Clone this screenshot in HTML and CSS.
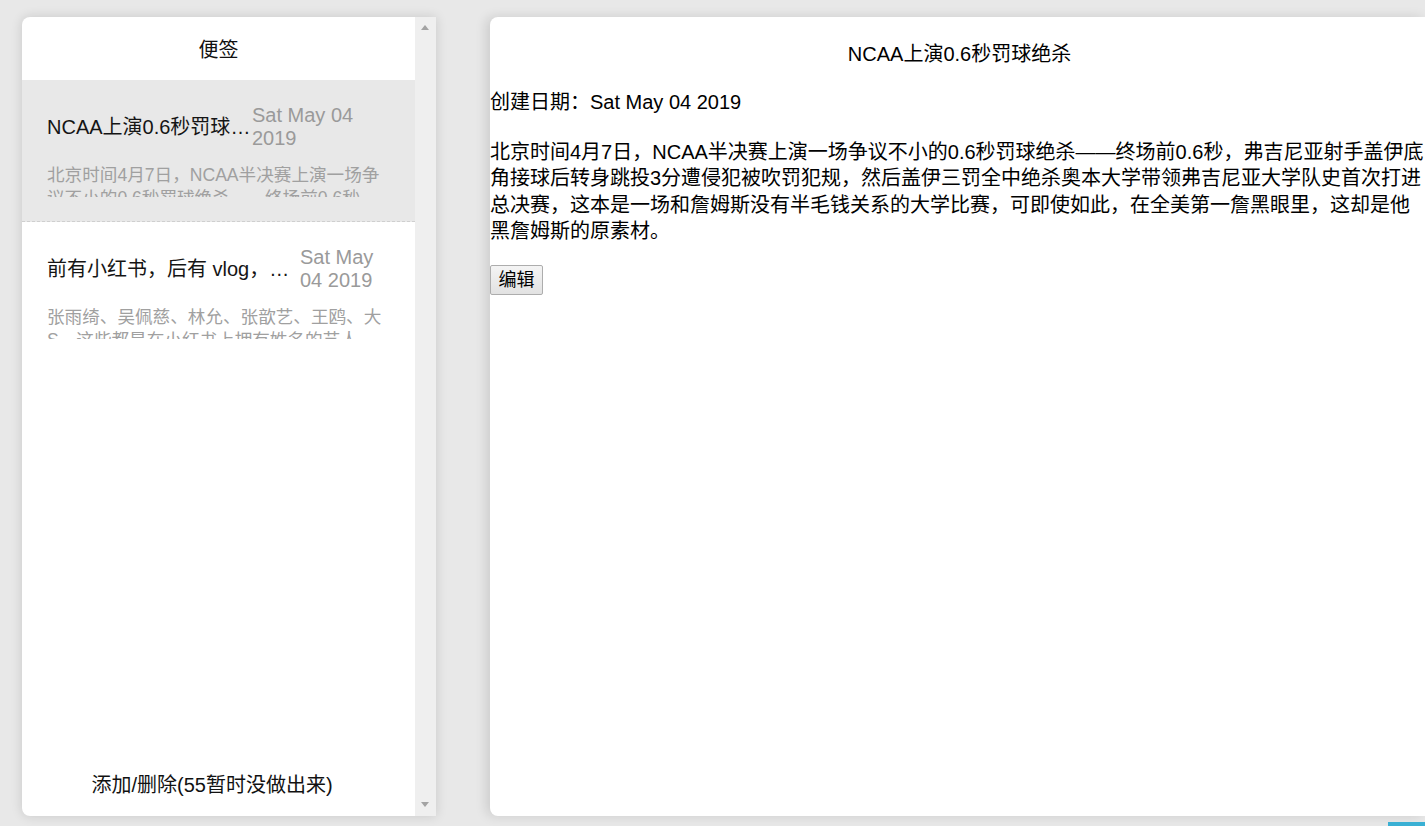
FILE: index.html
```html
<!DOCTYPE html>
<html lang="zh-CN">
<head>
<meta charset="utf-8">
<title>便签</title>
<link rel="stylesheet" href="styles.css">
</head>
<body>
<div class="page">
  <aside class="sidebar">
    <div class="sidebar-main">
      <div class="sidebar-header">便签</div>
      <ul class="note-list">
        <li class="note-item is-active">
          <div class="note-head">
            <span class="note-title">NCAA上演0.6秒罚球绝杀</span>
            <span class="note-date date-wide">Sat May 04 2019</span>
          </div>
          <p class="note-desc">北京时间4月7日，NCAA半决赛上演一场争议不小的0.6秒罚球绝杀——终场前0.6秒，弗吉尼亚射手盖伊底角接球后转身跳投3分遭侵犯被吹罚犯规</p>
        </li>
        <li class="note-item">
          <div class="note-head">
            <span class="note-title">前有小红书，后有 vlog，明星们的日常生活都被晒出来了</span>
            <span class="note-date date-narrow">Sat May 04 2019</span>
          </div>
          <p class="note-desc">张雨绮、吴佩慈、林允、张歆艺、王鸥、大S，这些都是在小红书上拥有姓名的艺人，她们在这里分享自己的日常</p>
        </li>
      </ul>
      <div class="sidebar-footer">添加/删除(55暂时没做出来)</div>
    </div>
    <div class="scrollbar">
      <span class="arrow arrow-up"></span>
      <span class="arrow arrow-down"></span>
    </div>
  </aside>
  <main class="detail">
    <h1 class="detail-title">NCAA上演0.6秒罚球绝杀</h1>
    <div class="detail-date">创建日期：Sat May 04 2019</div>
    <p class="detail-body">北京时间4月7日，NCAA半决赛上演一场争议不小的0.6秒罚球绝杀——终场前0.6秒，弗吉尼亚射手盖伊底角接球后转身跳投3分遭侵犯被吹罚犯规，然后盖伊三罚全中绝杀奥本大学带领弗吉尼亚大学队史首次打进总决赛，这本是一场和詹姆斯没有半毛钱关系的大学比赛，可即使如此，在全美第一詹黑眼里，这却是他黑詹姆斯的原素材。</p>
    <button class="edit-btn" type="button">编辑</button>
  </main>
</div>
<div class="corner-tab"></div>
</body>
</html>
```

FILE: styles.css
```css
* { box-sizing: border-box; }

html, body {
  margin: 0;
  padding: 0;
  height: 100%;
  overflow: hidden;
}

body {
  background: #e8e8e8;
  font-family: "Liberation Sans", Arial, "Noto Sans CJK SC", sans-serif;
  color: #000;
}

.page {
  display: flex;
  align-items: flex-start;
  gap: 54px;
  padding: 17px 0 0 22px;
}

/* ---------- sidebar ---------- */
.sidebar {
  display: flex;
  width: 414px;
  height: 799px;
  background: #fff;
  border-radius: 8px 0 0 8px;
  box-shadow: 0 0 12px rgba(0, 0, 0, 0.14);
  overflow: hidden;
  flex: 0 0 auto;
}

.sidebar-main {
  display: flex;
  flex-direction: column;
  width: 393px;
  height: 100%;
}

.sidebar-header {
  height: 63px;
  padding-top: 20px;
  font-size: 20px;
  line-height: 26.4px;
  text-align: center;
  color: #111;
}

.note-list {
  list-style: none;
  margin: 0;
  padding: 0;
  flex: 1 1 auto;
}

.note-item {
  padding: 24px 25px 24px 25px;
  border-bottom: 1px dashed #cfcfcf;
  background: #fff;
}

.note-item:last-child {
  border-bottom-color: transparent;
}

.note-item.is-active {
  background: #e8e8e8;
}

.note-head {
  display: flex;
  align-items: center;
  height: 46px;
}

.note-title {
  flex: 1 1 auto;
  min-width: 0;
  white-space: nowrap;
  overflow: hidden;
  text-overflow: ellipsis;
  font-size: 20px;
  line-height: 24px;
  color: #151515;
}

.note-date {
  flex: 0 0 auto;
  font-size: 20px;
  line-height: 23.3px;
  color: #9a9a9a;
}

.date-wide { width: 138px; }
.date-narrow { width: 90px; }

.note-desc {
  margin: 14px 0 0 0;
  height: 33px;
  overflow: hidden;
  font-size: 17.6px;
  line-height: 23.2px;
  color: #a0a0a0;
}

.sidebar-footer {
  padding: 0 13px 18px 0;
  font-size: 20px;
  line-height: 26.4px;
  text-align: center;
  color: #111;
}

.scrollbar {
  position: relative;
  width: 21px;
  height: 100%;
  background: #efefef;
  flex: 0 0 auto;
}

.arrow {
  position: absolute;
  left: 6px;
  width: 0;
  height: 0;
  border-left: 4.5px solid transparent;
  border-right: 4.5px solid transparent;
}

.arrow-up {
  top: 8px;
  border-bottom: 5px solid #a3a3a3;
}

.arrow-down {
  bottom: 9px;
  border-top: 5px solid #a3a3a3;
}

/* ---------- detail ---------- */
.detail {
  width: 935px;
  height: 799px;
  flex: 0 0 auto;
  background: #fff;
  border-radius: 8px 0 0 8px;
  box-shadow: -4px 0 12px rgba(0, 0, 0, 0.12);
  padding-top: 24px;
}

.detail-title {
  margin: 0 0 22px 0;
  padding-left: 4px;
  font-size: 20px;
  font-weight: normal;
  line-height: 26.4px;
  text-align: center;
}

.detail-date {
  font-size: 20px;
  line-height: 26.4px;
  margin-bottom: 23px;
}

.detail-body {
  margin: 0 0 21px 0;
  font-size: 20px;
  line-height: 26.4px;
}

.edit-btn {
  display: block;
  height: 30px;
  padding: 0 7.5px;
  font-family: inherit;
  font-size: 18px;
  line-height: 26px;
  color: #000;
  background: linear-gradient(#f4f4f4, #e2e2e2);
  border: 1px solid #adadad;
  border-radius: 2px;
}

.corner-tab {
  position: fixed;
  left: 1388px;
  top: 822px;
  width: 37px;
  height: 4px;
  background: #3ab0d4;
}
```
